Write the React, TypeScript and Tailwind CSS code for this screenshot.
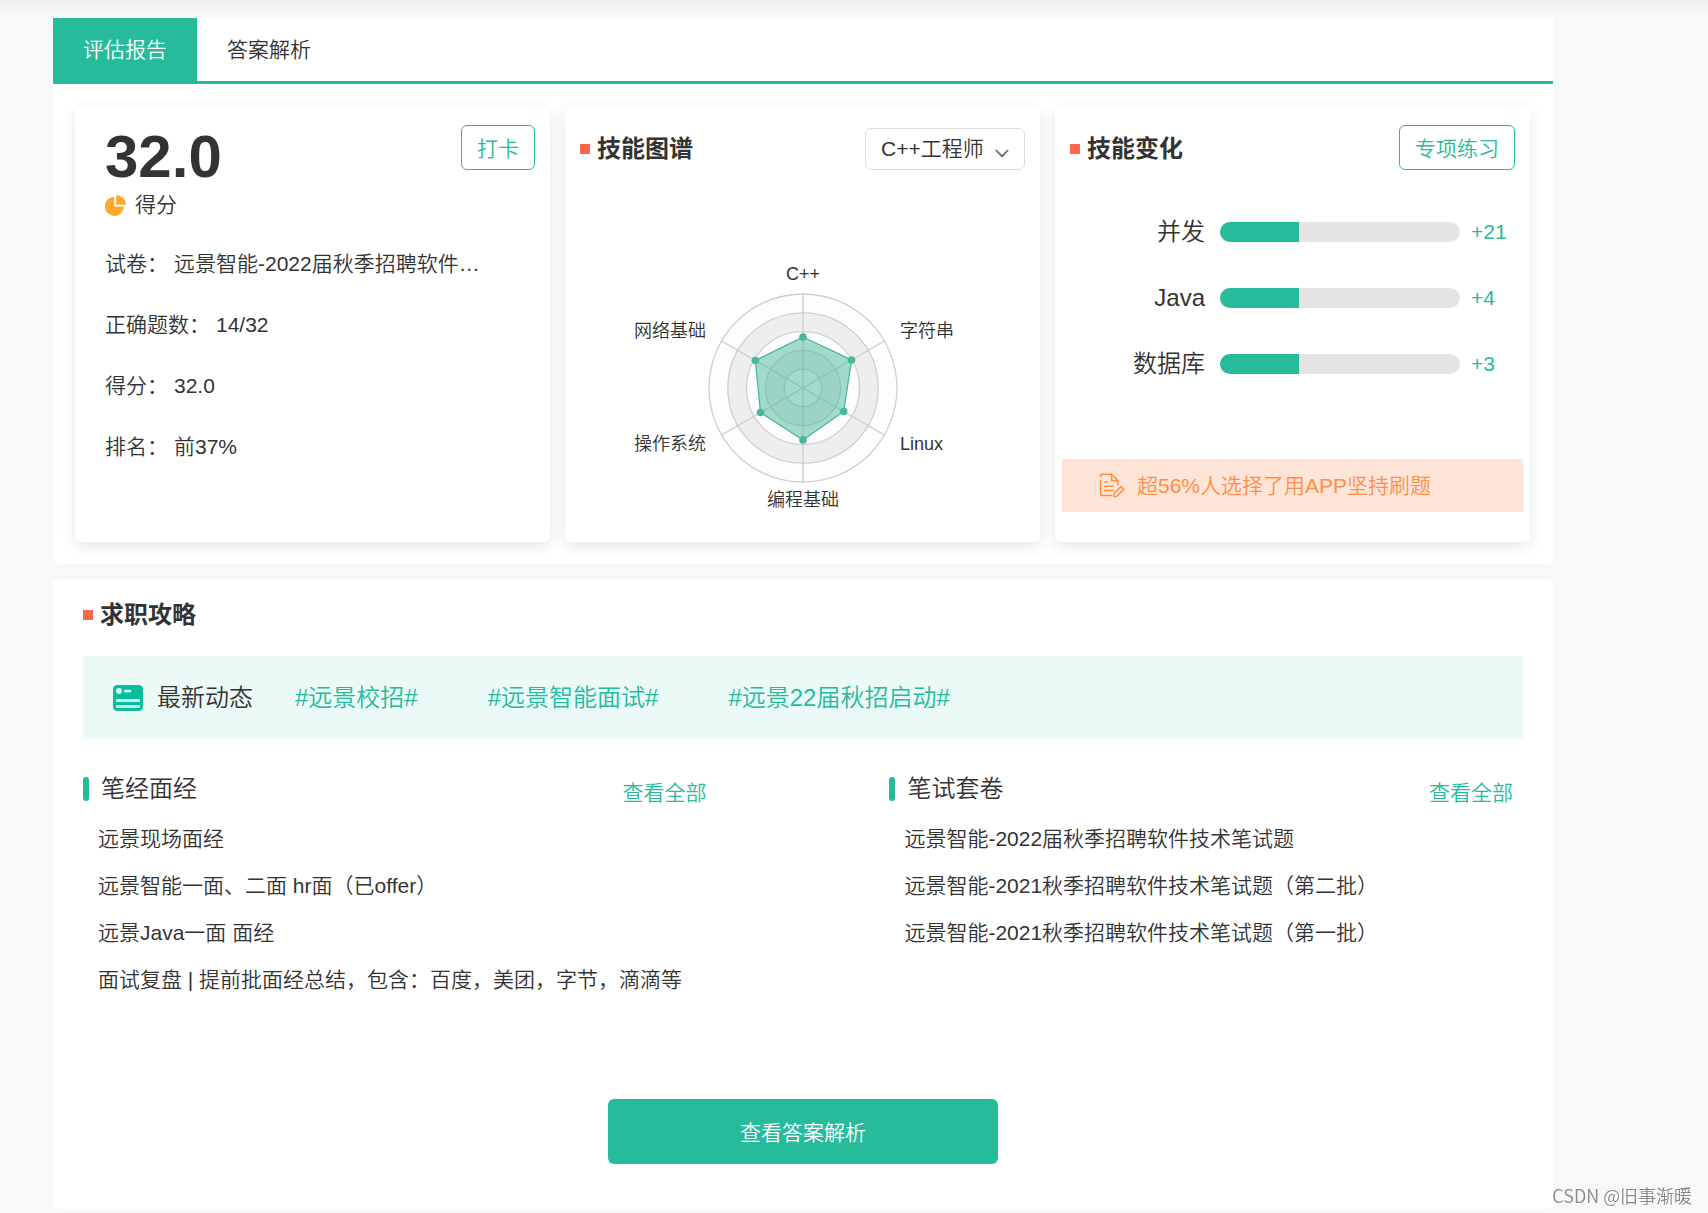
import React, { useState } from 'react';

const skills = [
  { name: '并发', change: '+21', percent: 33 },
  { name: 'Java', change: '+4', percent: 33 },
  { name: '数据库', change: '+3', percent: 33 },
];

const details = [
  { label: '试卷：', value: '远景智能-2022届秋季招聘软件…' },
  { label: '正确题数：', value: '14/32' },
  { label: '得分：', value: '32.0' },
  { label: '排名：', value: '前37%' },
];

const topics = ['#远景校招#', '#远景智能面试#', '#远景22届秋招启动#'];

const interviews = [
  '远景现场面经',
  '远景智能一面、二面 hr面（已offer）',
  '远景Java一面 面经',
  '面试复盘 | 提前批面经总结，包含：百度，美团，字节，滴滴等',
];

const papers = [
  '远景智能-2022届秋季招聘软件技术笔试题',
  '远景智能-2021秋季招聘软件技术笔试题（第二批）',
  '远景智能-2021秋季招聘软件技术笔试题（第一批）',
];

const SectionTitle: React.FC<{ children: React.ReactNode }> = ({ children }) => (
  <h2 className="flex items-center gap-[7px] pt-0.5 text-2xl font-bold">
    <span className="h-2.5 w-2.5 bg-[#ff6547]"></span>
    {children}
  </h2>
);

const Card: React.FC<{ children: React.ReactNode }> = ({ children }) => (
  <section className="min-w-0 rounded-md bg-white shadow-[0_4px_16px_rgba(0,0,0,0.1)]">{children}</section>
);

const OutlineButton: React.FC<{ children: React.ReactNode }> = ({ children }) => (
  <button type="button" className="h-[45px] rounded-md border border-[#25bb9b] px-[15px] pt-0.5 text-[21px] text-[#25bb9b]">
    {children}
  </button>
);

// Radar chart
const CX = 200;
const CY = 130;
const RADIUS = 94;

const axes = [
  { name: 'C++', r: 51, x: 200, y: 22, anchor: 'middle' },
  { name: '字符串', r: 56, x: 297, y: 79, anchor: 'start' },
  { name: 'Linux', r: 47, x: 297, y: 192, anchor: 'start' },
  { name: '编程基础', r: 52, x: 200, y: 248, anchor: 'middle' },
  { name: '操作系统', r: 49, x: 103, y: 192, anchor: 'end' },
  { name: '网络基础', r: 55, x: 103, y: 79, anchor: 'end' },
] as const;

const point = (i: number, r: number) => {
  const angle = (Math.PI / 3) * i - Math.PI / 2;
  return [CX + r * Math.cos(angle), CY + r * Math.sin(angle)];
};

const RadarChart: React.FC = () => (
  <svg width="400" height="260" viewBox="0 0 400 260" className="mx-auto block" role="img">
    {[5, 4, 3, 2, 1].map((n) => (
      <circle
        key={n}
        cx={CX}
        cy={CY}
        r={(RADIUS / 5) * n}
        fill={n % 2 === 0 ? '#eeeeee' : '#fdfdfd'}
        stroke="#cfcfcf"
        strokeWidth="1.3"
      />
    ))}
    {axes.map((axis, i) => {
      const [x, y] = point(i, RADIUS);
      return <line key={axis.name} x1={CX} y1={CY} x2={x} y2={y} stroke="#cccccc" strokeWidth="1.3" />;
    })}
    <polygon
      points={axes.map((axis, i) => point(i, axis.r).join(',')).join(' ')}
      fill="#47b899"
      fillOpacity="0.5"
      stroke="#47b899"
      strokeWidth="1.3"
    />
    {axes.map((axis, i) => {
      const [x, y] = point(i, axis.r);
      return <circle key={axis.name} cx={x} cy={y} r="3.8" fill="#47b899" />;
    })}
    {axes.map((axis) => (
      <text key={axis.name} x={axis.x} y={axis.y} textAnchor={axis.anchor} fill="#333333" fontSize="18">
        {axis.name}
      </text>
    ))}
  </svg>
);

const LinkList: React.FC<{ title: string; items: string[] }> = ({ title, items }) => (
  <section className="w-[44%]">
    <div className="flex h-9 items-center justify-between pr-2.5">
      <h3 className="flex items-center gap-3 text-2xl">
        <span className="h-6 w-1.5 rounded-full bg-[#25bb9b]"></span>
        {title}
      </h3>
      <a href="#" className="pt-2 text-[21px] text-[#25bb9b]">查看全部</a>
    </div>
    <ul className="mt-2 pl-[15px] text-[21px] leading-[47px]">
      {items.map((item) => (
        <li key={item}>
          <a href="#" className="block whitespace-nowrap">{item}</a>
        </li>
      ))}
    </ul>
  </section>
);

const App: React.FC = () => {
  const [tab, setTab] = useState('report');
  const [job, setJob] = useState('cpp');

  return (
    <div className="min-h-screen bg-[#f7f8fa] pb-1 font-['Liberation_Sans','Noto_Sans_CJK_SC',sans-serif] font-[350] text-[#333]">
      <div className="h-[18px] bg-linear-to-b from-[#edeef0] to-[#f7f8fa] to-70%"></div>

      <main className="mr-[155px] ml-[53px]">
        <div className="rounded-b-md bg-white">
          <nav className="flex h-[66px] border-b-3 border-[#25bb9b] text-[21px]">
            <button
              type="button"
              onClick={() => setTab('report')}
              className={tab === 'report' ? 'bg-[#25bb9b] px-[30px] text-white' : 'px-[30px]'}
            >
              评估报告
            </button>
            <button
              type="button"
              onClick={() => setTab('answer')}
              className={tab === 'answer' ? 'bg-[#25bb9b] px-[30px] text-white' : 'px-[30px]'}
            >
              答案解析
            </button>
          </nav>

          <div className="grid grid-cols-3 gap-[15px] pt-[23px] pr-[23px] pb-[22px] pl-[22px]">
            {/* Score */}
            <Card>
              <div className="flex items-start justify-between pt-[18px] pr-[15px] pl-[30px]">
                <div>
                  <p className="text-[60px] leading-[64px] font-bold">32.0</p>
                  <p className="flex h-8 items-center gap-[9px] text-[21px]">
                    <svg width="21" height="21" viewBox="0 0 21 21" fill="#ffa82e">
                      <path d="M9.2 1.7 V11.6 H19 A9.6 9.6 0 1 1 9.2 1.7 Z" />
                      <path d="M11.2 0 A9.8 9.8 0 0 1 21 9.8 H11.2 Z" />
                    </svg>
                    得分
                  </p>
                </div>
                <OutlineButton>打卡</OutlineButton>
              </div>
              <dl className="mt-3 pl-[30px] text-[21px]">
                {details.map((item) => (
                  <div key={item.label} className="flex h-[61px] items-center gap-1.5">
                    <dt>{item.label}</dt>
                    <dd className="whitespace-nowrap">{item.value}</dd>
                  </div>
                ))}
              </dl>
            </Card>

            {/* Skill map */}
            <Card>
              <div className="flex items-center justify-between px-[15px] pt-[18px]">
                <SectionTitle>技能图谱</SectionTitle>
                <div className="relative flex h-[45px] items-end">
                  <select
                    aria-label="职位"
                    value={job}
                    onChange={(e) => setJob(e.target.value)}
                    className="h-[42px] w-40 appearance-none rounded-md border border-[#dddddd] bg-white pl-[15px] text-[21px]"
                  >
                    <option value="cpp">C++工程师</option>
                    <option value="java">Java工程师</option>
                  </select>
                  <svg
                    className="pointer-events-none absolute right-4 bottom-2.5"
                    width="14"
                    height="14"
                    viewBox="0 0 14 14"
                    fill="none"
                    stroke="#666666"
                    strokeWidth="1.7"
                  >
                    <path d="M0.8 4 L7 10.2 L13.2 4" />
                  </svg>
                </div>
              </div>
              <div className="mt-[88px]">
                <RadarChart />
              </div>
            </Card>

            {/* Skill changes */}
            <Card>
              <div className="flex items-center justify-between px-[15px] pt-[18px]">
                <SectionTitle>技能变化</SectionTitle>
                <OutlineButton>专项练习</OutlineButton>
              </div>
              <ul className="mt-[29px]">
                {skills.map((skill) => (
                  <li key={skill.name} className="flex h-[66px] items-center">
                    <span className="w-[150px] text-right text-2xl">{skill.name}</span>
                    <div className="mr-[11px] ml-[15px] h-5 flex-1 overflow-hidden rounded-full bg-[#e4e4e4]">
                      <div className="h-full bg-[#25bb9b]" style={{ width: `${skill.percent}%` }}></div>
                    </div>
                    <span className="w-[59px] text-[21px] text-[#25bb9b]">{skill.change}</span>
                  </li>
                ))}
              </ul>
              <a
                href="#"
                className="mx-[7px] mt-[62px] mb-[30px] flex h-[53px] items-center gap-3 bg-[#fee5d7] pl-[37px] text-[21px] text-[#ff8f47]"
              >
                <svg
                  width="26"
                  height="26"
                  viewBox="0 0 26 26"
                  fill="none"
                  stroke="currentColor"
                  strokeWidth="1.5"
                  strokeLinecap="round"
                  strokeLinejoin="round"
                >
                  <path d="M1.5 3.6 V3 Q1.5 1.2 3.3 1.2 H12.5 L19 7.7 V12" />
                  <path d="M12.6 1.4 V7.8 H18.8" />
                  <path d="M1.5 7.5 V20.8 Q1.5 22.6 3.3 22.6 H12.5" />
                  <path d="M5.6 9 H8.4 M5.6 13.2 H14.4 M5.6 17.4 H14.4" />
                  <path d="M22 13.6 L24.6 16.4 L17.6 23.6 H14.8 V20.8 Z" />
                </svg>
                超56%人选择了用APP坚持刷题
              </a>
            </Card>
          </div>
        </div>

        <div className="mt-[15px] rounded-md bg-white px-[30px] pt-[17px] pb-[45px]">
          <div className="flex h-9 items-center">
            <SectionTitle>求职攻略</SectionTitle>
          </div>

          <div className="mt-6 flex h-[83px] items-center bg-[#ebfaf7] pl-[30px] text-2xl">
            <svg width="30" height="26" viewBox="0 0 30 26">
              <rect width="30" height="26" rx="4.5" fill="#06bd9c" />
              <circle cx="6" cy="6" r="2.9" fill="#dff8f3" />
              <rect x="11" y="4.8" width="7.5" height="2.6" rx="1.3" fill="#c8f2ea" />
              <rect x="3" y="14" width="24" height="3" rx="1.2" fill="#c8f2ea" />
              <rect x="3" y="20" width="24" height="3" rx="1.2" fill="#c8f2ea" />
            </svg>
            <span className="ml-3.5">最新动态</span>
            <div className="ml-[42px] flex gap-[70px] text-[#25bb9b]">
              {topics.map((topic) => (
                <a key={topic} href="#">{topic}</a>
              ))}
            </div>
          </div>

          <div className="mt-8 flex justify-between">
            <LinkList title="笔经面经" items={interviews} />
            <LinkList title="笔试套卷" items={papers} />
          </div>

          <button
            type="button"
            className="mx-auto mt-24 block h-[65px] w-[390px] rounded-md bg-[#25bb9b] pt-0.5 text-[21px] text-white"
          >
            查看答案解析
          </button>
        </div>
      </main>

      <p className="fixed right-4 bottom-1.5 font-['Noto_Sans_CJK_SC',sans-serif] text-lg leading-6 text-[#888] [text-shadow:1px_1px_0_#fff]">
        CSDN @旧事渐暖
      </p>
    </div>
  );
};

export default App;
